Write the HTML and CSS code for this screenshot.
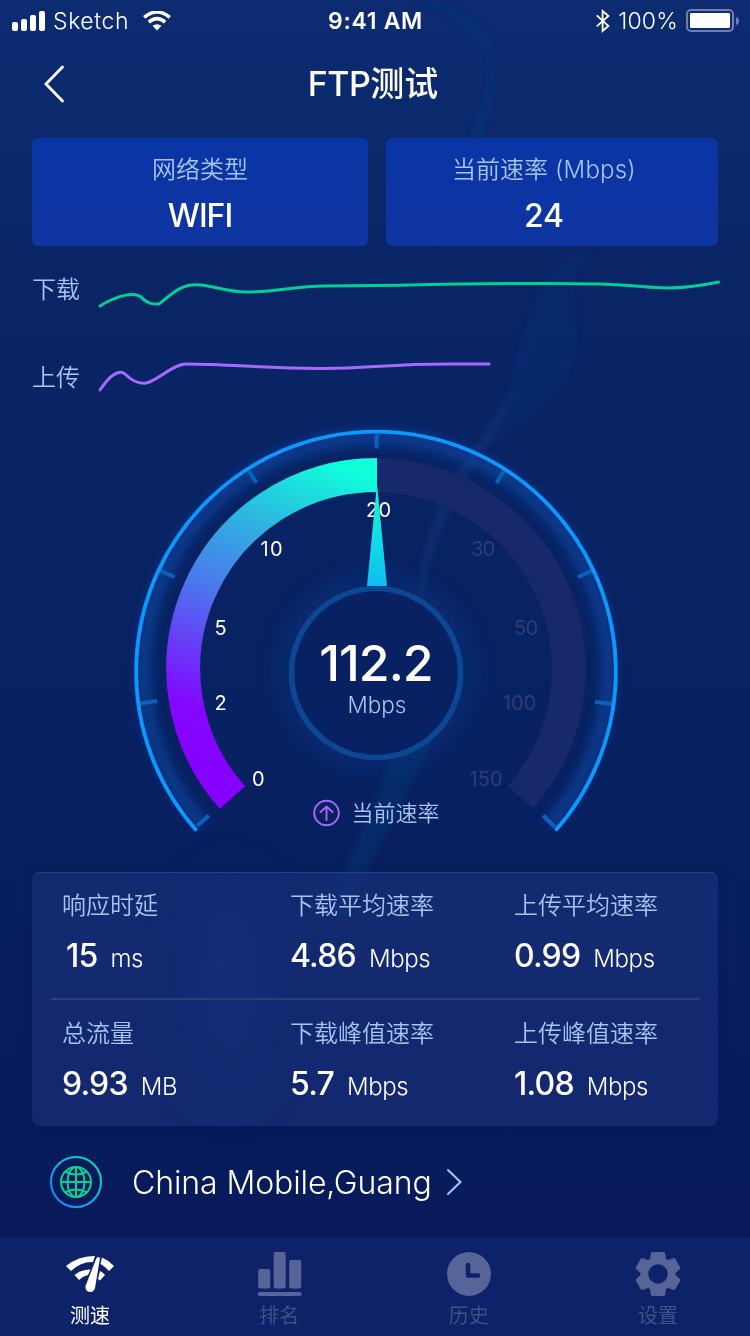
FILE: index.html
```html
<!DOCTYPE html>
<html lang="zh-CN">
<head>
<meta charset="utf-8">
<title>FTP测试</title>
<link rel="stylesheet" href="styles.css">
</head>
<body>
<main class="screen">
  <svg class="backdrop" viewBox="0 0 750 1336" aria-hidden="true">
    <defs><filter id="soft" x="-20%" y="-20%" width="140%" height="140%"><feGaussianBlur stdDeviation="3"/></filter>
    <filter id="haze" x="-100%" y="-50%" width="300%" height="200%"><feGaussianBlur stdDeviation="30"/></filter></defs>
    <g filter="url(#soft)">
      <path d="M430 0C470 12 490 30 493 60C500 150 445 170 436 250L428 250C430 190 489 130 490 62C475 28 455 12 415 0Z" fill="#11408c" opacity=".3"/>
      <path d="M600 246C530 275 535 310 520 370C508 440 440 490 424 595L418 595C420 540 445 480 480 440C490 420 505 405 515 380C525 320 540 275 600 246Z" fill="#123f86" opacity=".32"/>
      <path d="M600 246C530 275 535 310 520 370C518 400 500 425 480 450C540 410 585 380 575 320C567 285 572 265 600 246Z" fill="#123f86" opacity=".17"/>
      <path d="M395 740C380 800 345 850 335 910L345 925C360 870 405 810 432 740Z" fill="#14488c" opacity=".24"/>
    </g>
    <ellipse cx="230" cy="990" rx="30" ry="110" fill="#0c4484" opacity=".32" filter="url(#haze)"/>
  </svg>

  <div class="status">
    <div class="status-left">
      <svg width="34" height="20" viewBox="0 0 34 20" fill="#fff"><rect y="11" width="6" height="9" rx="2"/><rect x="9" y="8" width="6" height="12" rx="2"/><rect x="18" y="4" width="6" height="16" rx="2"/><rect x="27" width="6" height="20" rx="2"/></svg>
      <span class="carrier">Sketch</span>
      <svg class="wifi" width="28" height="20" viewBox="0 0 28 20"><g fill="none" stroke="#fff" stroke-width="3.6"><path d="M1.2 6.3Q14-4.3 26.8 6.3"/><path d="M5.8 11.2Q14 4.2 22.2 11.2"/></g><path d="M9.5 14.7Q14 11.6 18.5 14.7L14 19.6Z" fill="#fff"/></svg>
    </div>
    <span class="clock">9:41 AM</span>
    <div class="status-right">
      <svg width="14" height="24" viewBox="0 0 14 24" fill="none" stroke="#fff" stroke-width="1.8"><path d="M.8 6.4L12.4 17L6.6 22V2L12.4 7L.8 17.4"/></svg>
      <span class="battery-text">100%</span>
      <svg width="53" height="24" viewBox="0 0 53 24"><rect x="1" y="1" width="46" height="21" rx="4" fill="none" stroke="#7080aa" stroke-width="2"/><rect x="4" y="4" width="40" height="15" rx="1.2" fill="#fff"/><path d="M50 8Q53 9 53 12T50 16Z" fill="#7080aa"/></svg>
    </div>
  </div>

  <header class="header">
    <svg class="back" width="22" height="38" viewBox="0 0 22 38"><path d="M19.5 2L3 19L19.5 36" fill="none" stroke="#fff" stroke-width="2.8" stroke-linecap="round"/></svg>
    <h1 class="title"><span class="title-latin">FTP</span>测试</h1>
  </header>

  <section class="cards">
    <div class="card"><span class="label">网络类型</span><strong class="card-value wifi-value">WIFI</strong></div>
    <div class="card rate-card"><span class="label">当前速率<span class="paren"> (Mbps)</span></span><strong class="card-value">24</strong></div>
  </section>

  <section class="trends">
    <div class="trend"><span class="label">下载</span><svg width="624" height="36" viewBox="96 272 624 36"><path d="M100 306C116 296 136 290 143 299C149 304 152 304 159 304C174 292 182 283 201 285C214 286 226 292 247 292C278 292 294 286 325 286L400 285.300C460 284 560 283 600 284C640 285 645 288 667 288Q690 288 718.500 282" fill="none" stroke="#00cf96" stroke-width="3" stroke-linecap="round"/></svg></div>
    <div class="trend"><span class="label">上传</span><svg width="624" height="36" viewBox="96 360 624 36"><path d="M100 390C108 378 118 368 125 374C132 381 139 384 146 383C157 381 173 364 186 364C230 364 270 369 325 368.500C370 368 390 364 450 364H489" fill="none" stroke="#a768ff" stroke-width="3" stroke-linecap="round"/></svg></div>
  </section>

  <svg class="gauge" width="750" height="444" viewBox="0 420 750 444">
    <defs>
      <linearGradient id="band" gradientUnits="userSpaceOnUse" x1="240" y1="780" x2="355" y2="470"><stop offset="0" stop-color="#8500ff"/><stop offset=".16" stop-color="#8208ff"/><stop offset=".52" stop-color="#4b78ed"/><stop offset=".73" stop-color="#30aee2"/><stop offset="1" stop-color="#0fffdb"/></linearGradient>
      <linearGradient id="needle" x1="0" y1="0" x2="0" y2="1"><stop offset="0" stop-color="#0fffdb"/><stop offset="1" stop-color="#10bdf2"/></linearGradient>
      <filter id="glow" filterUnits="userSpaceOnUse" x="110" y="400" width="530" height="470"><feGaussianBlur stdDeviation="5.500"/></filter>
      <filter id="wide" filterUnits="userSpaceOnUse" x="220" y="520" width="310" height="310"><feGaussianBlur stdDeviation="11"/></filter>
    </defs>
    <path d="M202 824A232.500 232.500 0 1 1 550 824" fill="none" stroke="#0d48a6" stroke-width="14" opacity=".68" filter="url(#glow)"/>
    <circle cx="376" cy="673" r="91" fill="none" stroke="#0d4796" stroke-width="14" opacity=".38" filter="url(#wide)"/>
    <circle cx="376" cy="673" r="82" fill="#082163"/>
    <g stroke="#0962bb" stroke-width="4"><path d="M376.500 434V448.500M249 471L256.500 483M160 570.500L174.500 577M140 703.500L157 701M197 826L209 815.500M504 471L496.500 483M592.500 570.500L578 577M612 704L595 702M555 827L543 815.500"/></g>
    <path d="M196.500 829.500A239.800 239.800 0 1 1 555.500 829.500" transform="translate(0 1)" fill="none" stroke="#0d98ff" stroke-width="3.800"/>
    <path d="M377 475.500A193.500 193.500 0 0 1 520.500 797" fill="none" stroke="#17286d" stroke-width="34"/>
    <path d="M232.500 797.500A193.500 193.500 0 0 1 377 475" fill="none" stroke="url(#band)" stroke-width="34"/>
    <g class="ticks"><text x="252" y="786">0</text><text x="214.500" y="710">2</text><text x="214.500" y="635">5</text><text x="260.500" y="556" textLength="22">10</text><text x="366" y="517" textLength="25">20</text></g>
    <g class="ticks idle"><text x="471" y="556" textLength="24">30</text><text x="514" y="635" textLength="24">50</text><text x="503" y="710" textLength="33">100</text><text x="469.500" y="786" textLength="33">150</text></g>
    <path d="M377 484L387 586H367Z" fill="url(#needle)"/>
    <circle cx="376" cy="673" r="84.500" fill="none" stroke="#0b4793" stroke-width="5.600"/>
    <text class="speed" x="376" y="681">112.2</text>
    <text class="unit" x="377" y="713">Mbps</text>
    <g fill="none" stroke="#a768ff" stroke-width="1.900" stroke-linecap="round"><circle cx="326.500" cy="813" r="12.300"/><path d="M326.500 820V807M320.500 812L326.500 806.500L332.500 812"/></g>
    <text class="current" x="351.500" y="821">当前速率</text>
  </svg>

  <section class="panel">
    <div class="row">
      <div class="stat"><span class="label">响应时延</span><p class="reading inset"><b>15</b><span>ms</span></p></div>
      <div class="stat"><span class="label">下载平均速率</span><p class="reading"><b>4.86</b><span>Mbps</span></p></div>
      <div class="stat"><span class="label">上传平均速率</span><p class="reading"><b>0.99</b><span>Mbps</span></p></div>
    </div>
    <div class="row">
      <div class="stat"><span class="label">总流量</span><p class="reading"><b>9.93</b><span>MB</span></p></div>
      <div class="stat"><span class="label">下载峰值速率</span><p class="reading"><b>5.7</b><span>Mbps</span></p></div>
      <div class="stat"><span class="label">上传峰值速率</span><p class="reading"><b>1.08</b><span>Mbps</span></p></div>
    </div>
  </section>

  <section class="operator">
    <svg width="52" height="52" viewBox="0 0 52 52" fill="none"><defs><linearGradient id="orb" x1="0" y1=".8" x2=".8" y2="0"><stop offset="0" stop-color="#128dff"/><stop offset="1" stop-color="#10d9bf"/></linearGradient></defs><circle cx="26" cy="26" r="25" stroke="url(#orb)" stroke-width="2"/><g stroke="#04d596" stroke-width="2"><circle cx="26" cy="26" r="15"/><ellipse cx="26" cy="26" rx="8.500" ry="15"/><path d="M26 11V18M26 34V41M11 26H41M15 15.500Q26 21.500 37 15.500M15 36.500Q26 30.500 37 36.500M26 18V34"/></g></svg>
    <span class="operator-name">China Mobile,Guang</span>
    <svg width="18" height="28" viewBox="0 0 18 28"><path d="M2 2L14.500 14L2 26" fill="none" stroke="#a6c5ff" stroke-width="2" stroke-linecap="round"/></svg>
  </section>

  <nav class="tabs">
    <div class="tab active"><svg width="60" height="46" viewBox="60 1251 60 46" fill="#fff"><path d="M66 1266Q79 1255.500 95 1256L93 1262Q81 1261.500 71 1271Z"/><path d="M102 1257.500Q108 1260 114 1266L109 1271Q105 1266.500 100.500 1264Z"/><path d="M74.500 1275Q82 1269 90.500 1269.500L88 1275Q83 1276 79 1280Z"/><path d="M100 1271Q103 1272.500 105 1275L100 1280.500L98 1279Z"/><path d="M96.500 1258Q98.500 1256 100 1258L95 1288Q93.500 1292.500 90 1292Q85 1291 85.500 1286Z"/></svg><span>测速</span></div>
    <div class="tab"><svg width="60" height="46" viewBox="249.300 1251 60 46"><rect x="258.500" y="1269" width="12" height="19.500" rx="2"/><rect x="274" y="1252" width="12" height="36.500" rx="2"/><rect x="289.500" y="1260" width="12" height="28.500" rx="2"/><rect x="258" y="1292" width="44" height="4" rx="2"/></svg><span>排名</span></div>
    <div class="tab"><svg width="60" height="46" viewBox="439 1251 60 46"><circle cx="469" cy="1274" r="22"/><path d="M468 1265V1275.500H478" fill="none" stroke="#0d2268" stroke-width="4.500" stroke-linecap="round" stroke-linejoin="round"/></svg><span>历史</span></div>
    <div class="tab"><svg width="60" height="46" viewBox="628 1251 60 46"><path fill-rule="evenodd" d="M652.500 1252H663.500Q665 1252 665.200 1253.500L666 1259L668 1260L673 1258.200Q674.500 1257.700 675.400 1259L680 1267Q680.700 1268.400 679.400 1269.500L675.500 1273V1275L679.400 1278.500Q680.700 1279.600 680 1281L675.400 1289Q674.500 1290.300 673 1289.800L668 1288L666 1289L665.200 1294.500Q665 1296 663.500 1296H652.500Q651 1296 650.800 1294.500L650 1289L648 1288L643 1289.800Q641.500 1290.300 640.600 1289L636 1281Q635.300 1279.600 636.600 1278.500L640.500 1275V1273L636.600 1269.500Q635.300 1268.400 636 1267L640.600 1259Q641.500 1257.700 643 1258.200L648 1260L650 1259L650.800 1253.500Q651 1252 652.500 1252ZM658 1264.300A9.700 9.700 0 1 0 658 1283.700A9.700 9.700 0 1 0 658 1264.300Z"/></svg><span>设置</span></div>
  </nav>
</main>
</body>
</html>
```

FILE: styles.css
```css
* { box-sizing: border-box; margin: 0; }
body { background: #091959; color: #fff; font-family: Inter, "Noto Sans CJK SC", sans-serif; }
svg { display: block; flex: none; }
.screen { position: relative; isolation: isolate; width: 750px; height: 1336px; overflow: hidden; display: flex; flex-direction: column; background: linear-gradient(180deg, #0c2b71 0, #0b296c 130px, #092566 280px, #082263 640px, #082060 850px, #081b5b 1150px, #081857 1336px); white-space: nowrap; }
.backdrop { position: absolute; inset: 0; z-index: -1; }

.status { height: 40px; display: grid; grid-template-columns: 1fr auto 1fr; padding: 0 11px 0 12px; font-size: 23px; line-height: 42px; }
.status-left, .status-right { display: flex; align-items: center; }
.status-left { gap: 7px; }
.carrier { width: 77px; font-weight: 350; letter-spacing: .6px; }
.wifi { margin-left: 6px; }
.clock { font-weight: 600; letter-spacing: .7px; }
.status-right { justify-content: flex-end; gap: 8px; }
.battery-text { font-weight: 350; letter-spacing: .2px; }

.header { height: 98px; display: grid; grid-template-columns: 64px 1fr 68px; padding-top: 20px; }
.back { margin: 5px 0 0 43px; }
.title { text-align: center; font-size: 34px; font-weight: 500; line-height: 48px; }
.title-latin { font-weight: 450; letter-spacing: -.5px; }

.cards { display: grid; grid-template-columns: 336px 332px; gap: 18px; padding: 0 32px; }
.card { height: 108px; border-radius: 6px; display: flex; flex-direction: column; align-items: center; padding-top: 14px; background: linear-gradient(180deg, #0935a4, #1035a2); }
.rate-card { padding-right: 16px; }
.paren { letter-spacing: .2px; }
.label { font-size: 24px; line-height: 36px; font-weight: 350; color: #a6c5f3; }
.card-value { font-size: 32px; line-height: 40px; margin-top: 8px; font-weight: 500; }
.wifi-value { letter-spacing: -1px; }

.trends { height: 174px; padding: 26px 30px 0 32px; display: flex; flex-direction: column; gap: 52px; }
.trend { display: flex; justify-content: space-between; align-items: center; height: 36px; }

.gauge { height: 444px; }
.ticks { font-size: 20px; fill: #fff; }
.idle { fill: #2d3e78; }
.speed { font-size: 50px; font-weight: 550; letter-spacing: -1px; fill: #fff; text-anchor: middle; }
.unit { font-size: 22.5px; font-weight: 350; fill: #a6c5f3; text-anchor: middle; }
.current { font-size: 22px; font-weight: 350; fill: #a6c5f3; }

.panel { margin: 8px 32px 0; height: 254px; border-radius: 8px; background: rgba(30, 52, 130, .5); border-top: 1px solid #294180; padding: 0 19px; box-shadow: 0 2px 12px rgba(5, 17, 75, .3); }
.row { display: grid; grid-template-columns: 228px 224px 1fr; padding: 15px 0 0 11px; height: 127px; }
.row + .row { border-top: 2px solid #2b3f7e; padding-top: 16px; margin-top: -2px; }
.reading { display: flex; align-items: baseline; gap: 13px; margin-top: 12px; line-height: 40px; font-size: 24px; font-weight: 350; letter-spacing: -.4px; }
.reading b { font-size: 32px; font-weight: 500; letter-spacing: -.8px; }
.inset { padding-left: 4px; }

.operator { height: 112px; display: flex; align-items: center; padding: 0 50px; }
.operator-name { margin: 0 14px 0 30px; font-size: 32px; font-weight: 300; letter-spacing: -.1px; }

.tabs { height: 98px; display: flex; justify-content: space-between; padding: 13px 62px 0 60px; background: #0d2268; }
.tab { width: 60px; display: flex; flex-direction: column; align-items: center; gap: 5px; font-size: 20px; line-height: 28px; fill: #576497; color: #415087; font-weight: 400; }
.active { color: #fff; }
```
